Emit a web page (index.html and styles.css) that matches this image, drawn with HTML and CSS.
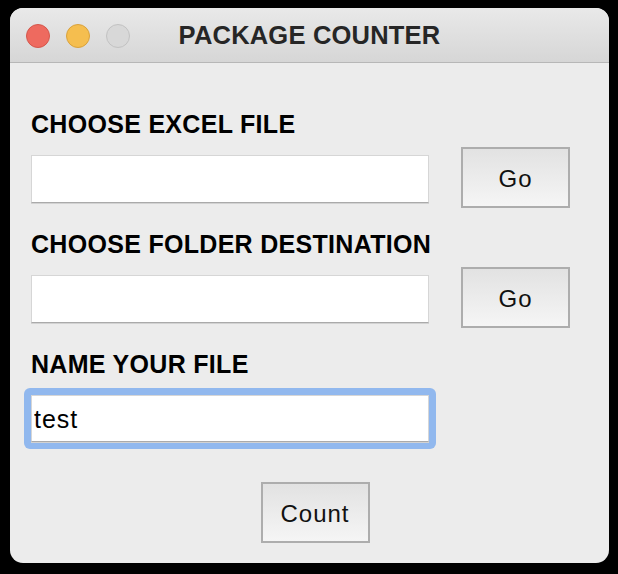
FILE: index.html
```html
<!DOCTYPE html>
<html>
<head>
<meta charset="utf-8">
<title>PACKAGE COUNTER</title>
<link rel="stylesheet" href="styles.css">
</head>
<body>
<div class="window">
  <div class="titlebar">
    <div class="lights">
      <span class="light red"></span>
      <span class="light yellow"></span>
      <span class="light grey"></span>
    </div>
    <div class="title">PACKAGE COUNTER</div>
    <div></div>
  </div>
  <div class="content">
    <div class="section">
      <div class="label">CHOOSE EXCEL FILE</div>
      <div class="row">
        <input class="field" type="text">
        <button class="btn">Go</button>
      </div>
    </div>
    <div class="section">
      <div class="label">CHOOSE FOLDER DESTINATION</div>
      <div class="row">
        <input class="field" type="text">
        <button class="btn">Go</button>
      </div>
    </div>
    <div class="section">
      <div class="label">NAME YOUR FILE</div>
      <div class="row">
        <div class="ring"><input class="field focused" type="text" value="test"></div>
      </div>
    </div>
    <div class="actions">
      <button class="btn">Count</button>
    </div>
  </div>
</div>
</body>
</html>
```

FILE: styles.css
```css
html, body {
  margin: 0;
  padding: 0;
  background: #000;
}
body {
  width: 618px;
  height: 574px;
  padding-top: 8px;
  padding-left: 10px;
  box-sizing: border-box;
  font-family: "Liberation Sans", Arial, sans-serif;
}
.window {
  width: 599px;
  height: 555px;
  background: #ececec;
  border-radius: 13px;
  overflow: hidden;
}
.titlebar {
  height: 54px;
  display: grid;
  grid-template-columns: 1fr auto 1fr;
  align-items: center;
  background: linear-gradient(#e9e9e9, #d6d6d6);
  border-bottom: 1px solid #b7b7b7;
}
.lights {
  display: flex;
  gap: 16px;
  padding-left: 16px;
  padding-top: 2px;
}
.light {
  width: 24px;
  height: 24px;
  border-radius: 50%;
  box-sizing: border-box;
}
.red { background: #ee6a5f; border: 1px solid #d4574c; }
.yellow { background: #f5be4f; border: 1px solid #d9a23d; }
.grey { background: #d8d8d8; border: 1px solid #c2c2c2; }
.title {
  font-size: 25.5px;
  font-weight: bold;
  letter-spacing: 0.2px;
  color: #262626;
  text-align: center;
}
.content {
  padding: 46px 10px 0 21px;
  display: flex;
  flex-direction: column;
}
.section {
  margin-bottom: 21px;
}
.label {
  font-size: 25px;
  line-height: 30px;
  font-weight: bold;
  letter-spacing: 0.3px;
  color: #000;
  margin-bottom: 8px;
}
.row {
  display: flex;
  align-items: flex-start;
  gap: 32px;
  height: 61px;
}
.field {
  margin: 8px 0 0 0;
  width: 398px;
  height: 48px;
  box-sizing: border-box;
  background: #fff;
  border: 1px solid #d6d6d6;
  border-bottom: 1px solid #aaaaaa;
  box-shadow: 0 1px 0 #d2d2d2;
  padding: 0 2px;
  font-family: "Liberation Sans", Arial, sans-serif;
  font-size: 25px;
  letter-spacing: 1px;
  color: #000;
  outline: none;
}
.ring {
  margin: 1px -7px 0 -7px;
  padding: 7px;
  background: #91b8ee;
  border-radius: 6px;
  display: flex;
}
.ring .field {
  margin: 0;
  height: 47px;
  padding-top: 2px;
}
.btn {
  width: 109px;
  height: 61px;
  box-sizing: border-box;
  border: 2px solid #adadad;
  border-radius: 0;
  background: linear-gradient(#e2e2e2, #f5f5f5);
  font-family: "Liberation Sans", Arial, sans-serif;
  font-size: 24px;
  letter-spacing: 1px;
  color: #111;
  padding: 3px 0 0 0;
}
.actions {
  display: flex;
  justify-content: center;
  margin-top: 13px;
}
```
